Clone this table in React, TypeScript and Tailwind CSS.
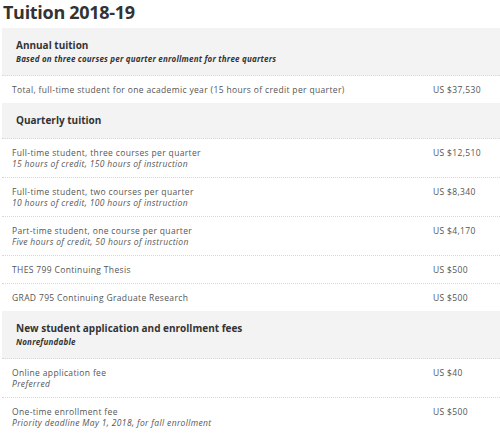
import React from 'react';

type Row = { label: string; note?: string; price: string };
type Section = { title: string; subtitle?: string; rows: Row[] };

const sections: Section[] = [
  {
    title: 'Annual tuition',
    subtitle: 'Based on three courses per quarter enrollment for three quarters',
    rows: [
      {
        label: 'Total, full-time student for one academic year (15 hours of credit per quarter)',
        price: 'US $37,530',
      },
    ],
  },
  {
    title: 'Quarterly tuition',
    rows: [
      {
        label: 'Full-time student, three courses per quarter',
        note: '15 hours of credit, 150 hours of instruction',
        price: 'US $12,510',
      },
      {
        label: 'Full-time student, two courses per quarter',
        note: '10 hours of credit, 100 hours of instruction',
        price: 'US $8,340',
      },
      {
        label: 'Part-time student, one course per quarter',
        note: 'Five hours of credit, 50 hours of instruction',
        price: 'US $4,170',
      },
      { label: 'THES 799 Continuing Thesis', price: 'US $500' },
      { label: 'GRAD 795 Continuing Graduate Research', price: 'US $500' },
    ],
  },
  {
    title: 'New student application and enrollment fees',
    subtitle: 'Nonrefundable',
    rows: [
      { label: 'Online application fee', note: 'Preferred', price: 'US $40' },
      {
        label: 'One-time enrollment fee',
        note: 'Priority deadline May 1, 2018, for fall enrollment',
        price: 'US $500',
      },
    ],
  },
];

const App = () => {
  return (
    <div className="w-[500px] h-[437px] overflow-hidden bg-white font-['Open_Sans',sans-serif]">
      <h1 className="pl-[3px] text-[18px] leading-[24px] tracking-[-0.3px] font-bold text-[#333] mb-[4px]">
        Tuition 2018-19
      </h1>

      <div className="ml-[2px]">
        {sections.map((section) => (
          <div key={section.title}>
            <div className="bg-[#f3f3f3] pl-[14px] py-[10px] border-b border-dotted border-[#d8d8d8]">
              <div className="text-[10px] leading-[15px] font-bold text-[#333]">{section.title}</div>
              {section.subtitle && (
                <div className="text-[8px] leading-[12px] tracking-[0.2px] font-bold italic text-[#333]">
                  {section.subtitle}
                </div>
              )}
            </div>

            {section.rows.map((row, i) => (
              <div
                key={row.label}
                className={
                  i === section.rows.length - 1
                    ? 'flex pl-[10px] py-[8px] text-[8.5px] leading-[11px] tracking-[0.35px] text-[#555]'
                    : 'flex pl-[10px] py-[8px] text-[8.5px] leading-[11px] tracking-[0.35px] text-[#555] border-b border-dotted border-[#d8d8d8]'
                }
              >
                <div className="flex-1">
                  <div>{row.label}</div>
                  {row.note && <div className="italic">{row.note}</div>}
                </div>
                <div className="w-[67px]">{row.price}</div>
              </div>
            ))}
          </div>
        ))}
      </div>
    </div>
  );
};

export default App;
